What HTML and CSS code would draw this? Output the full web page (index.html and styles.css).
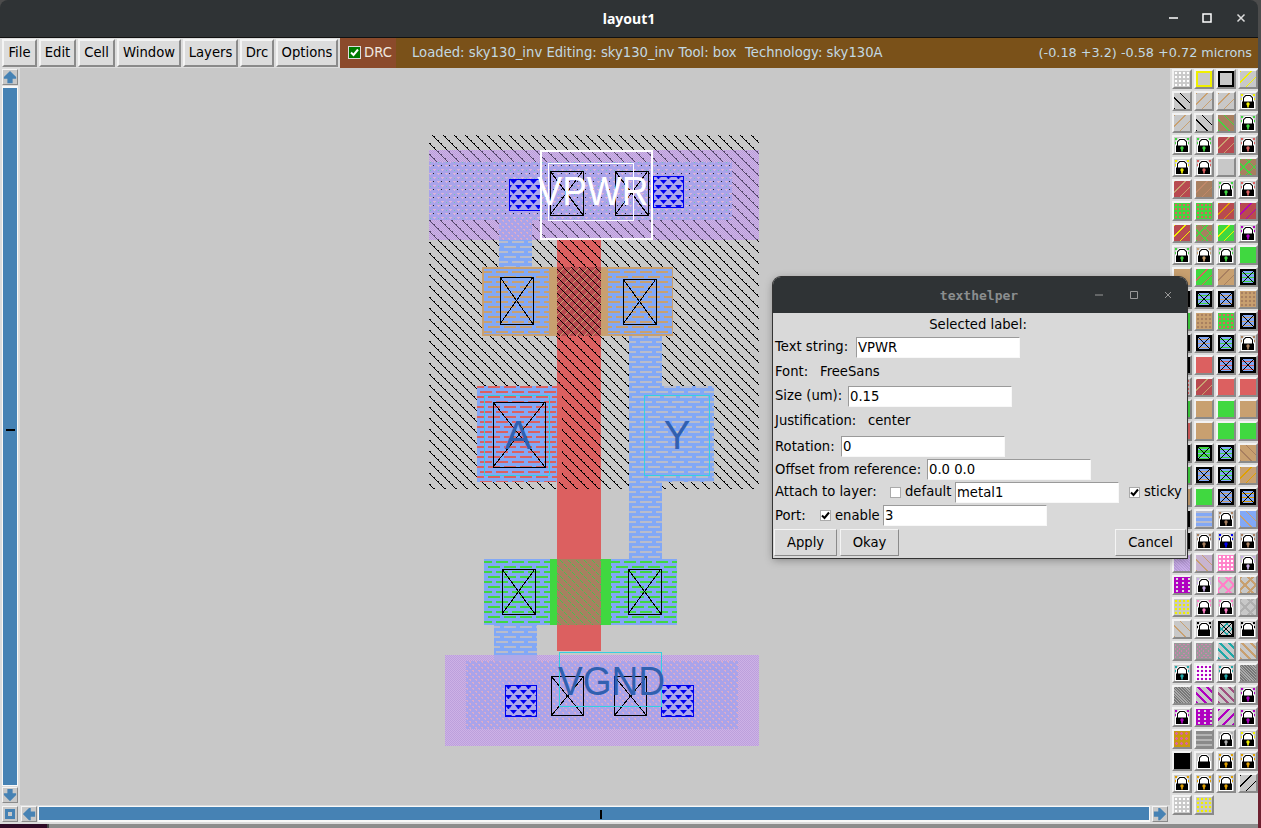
FILE: index.html
```html
<!DOCTYPE html>
<html lang="en">
<head>
<meta charset="utf-8">
<title>layout1</title>
<link rel="stylesheet" href="styles.css">
</head>
<body>
<svg class="defs" width="0" height="0" aria-hidden="true">
  <defs>
    <symbol id="L" viewBox="0 0 16 16">
      <path fill="#fff" d="M1 16V8h1V4l3-3h6l3 3v4h1v8z"/>
      <path fill="#000" d="M2 15V8.500h12V15z"/>
      <path fill="#000" d="M3 9V4.500L5.500 2h5L13 4.500V9h-1V5l-2-2H6L4 5v4z"/>
      <circle cx="8" cy="11" r="1.700" fill="currentColor"/>
      <rect x="7.200" y="11" width="1.600" height="3.500" fill="currentColor"/>
    </symbol>
    <symbol id="X" viewBox="0 0 16 16">
      <path fill="none" stroke="#000" stroke-width="2" d="M1 1h14v14H1z"/>
      <path fill="none" stroke="#000" d="M1 1l14 14M15 1L1 15"/>
    </symbol>
    <symbol id="arrow" viewBox="0 0 16 16">
      <path fill="#4682b4" d="M8 1l7 7v2h-4v5H5v-5H1V8z"/>
    </symbol>
    <pattern id="hatch" width="11" height="11" patternUnits="userSpaceOnUse">
      <path fill="#000" d="M0 0h2v1H0zM1 1h1v1H1zM2 2h1v1H2zM3 3h1v1H3zM4 4h2v1H4zM5 5h1v1H5zM6 6h1v1H6zM7 7h1v1H7zM8 8h2v1H8zM9 9h1v1H9zM10 10h1v1h-1z"/>
    </pattern>
    <pattern id="hatchp" width="11" height="11" patternUnits="userSpaceOnUse">
      <path fill="#54466a" d="M0 0h2v1H0zM1 1h1v1H1zM2 2h1v1H2zM3 3h1v1H3zM4 4h2v1H4zM5 5h1v1H5zM6 6h1v1H6zM7 7h1v1H7zM8 8h2v1H8zM9 9h1v1H9zM10 10h1v1h-1z"/>
    </pattern>
    <pattern id="hatchg" width="8" height="8" patternUnits="userSpaceOnUse">
      <path fill="#48c050" d="M0 0h1v1H0zM1 1h1v1H1zM2 2h1v1H2zM4 4h1v1H4zM5 5h1v1H5zM6 6h1v1H6z"/>
    </pattern>
    <pattern id="hatchc" width="8" height="8" patternUnits="userSpaceOnUse">
      <rect width="8" height="8" fill="#b84a50"/>
      <path fill="#000" d="M0 0h1v1H0zM1 1h1v1H1zM2 2h1v1H2zM3 3h1v1H3zM4 4h1v1H4zM5 5h1v1H5zM6 6h1v1H6zM7 7h1v1H7z"/>
      <path fill="#c8a070" d="M7 0h1v1H7zM6 1h1v1H6zM5 2h1v1H5zM3 4h1v1H3zM2 5h1v1H2zM1 6h1v1H1zM0 7h1v1H0z"/>
    </pattern>
    <pattern id="check" width="2" height="2" patternUnits="userSpaceOnUse">
      <rect width="2" height="2" fill="#cdb2e6"/>
      <path fill="#bca0dc" d="M0 0h1v1H0zM1 1h1v1H1z"/>
    </pattern>
    <pattern id="dots" width="8" height="8" patternUnits="userSpaceOnUse">
      <rect width="8" height="8" fill="#a9a3ea"/>
      <path fill="#dcb4d8" d="M1 1h3v1H1zM2 2h1v1H2zM5 5h3v1H5zM6 6h1v1H6z"/>
      <path fill="#70c8b0" d="M6 2h1v1H6z"/>
      <path fill="#222" d="M1 5h1v1H1z"/>
    </pattern>
    <pattern id="dots2" width="6" height="6" patternUnits="userSpaceOnUse">
      <rect width="6" height="6" fill="#a9a3ea"/>
      <path fill="#dcacc8" d="M1 1h2v1H1zM2 2h1v1H2zM4 4h2v1H4zM5 5h1v1H5z"/>
    </pattern>
    <pattern id="via" width="10" height="10" patternUnits="userSpaceOnUse">
      <rect width="10" height="10" fill="#aaa6ec"/>
      <path fill="#0000f0" d="M0 0h7l-3.500 4zM5 5h5v2l-1 2h-1z"/>
      <path fill="#0000f0" d="M0 5h2L0 8z"/>
    </pattern>
    <pattern id="stb" width="16" height="10" patternUnits="userSpaceOnUse">
      <rect width="16" height="10" fill="#82a8f6"/>
      <path fill="#b9bccb" d="M0 1h12v2H0zM8 6h8v2H8zM0 6h4v2H0z"/>
    </pattern>
    <pattern id="stt" width="16" height="10" patternUnits="userSpaceOnUse">
      <rect width="16" height="10" fill="#82a8f6"/>
      <path fill="#c8a070" d="M0 1h12v2H0zM8 6h8v2H8zM0 6h4v2H0z"/>
    </pattern>
    <pattern id="stg" width="16" height="10" patternUnits="userSpaceOnUse">
      <rect width="16" height="10" fill="#82a8f6"/>
      <path fill="#40d840" d="M0 1h12v2H0zM8 6h8v2H8zM0 6h4v2H0z"/>
    </pattern>
    <pattern id="str" width="16" height="10" patternUnits="userSpaceOnUse">
      <rect width="16" height="10" fill="#82a8f6"/>
      <path fill="#dc6060" d="M0 1h12v2H0zM8 6h8v2H8zM0 6h4v2H0z"/>
    </pattern>
  </defs>
</svg>

<div class="window">
  <header class="titlebar">
    <span class="title">layout1</span>
    <svg class="ctl ctl-min" width="12" height="12" viewBox="0 0 12 12"><path stroke="#fff" stroke-width="1.500" d="M1 6h9"/></svg>
    <svg class="ctl ctl-max" width="12" height="12" viewBox="0 0 12 12"><path fill="none" stroke="#fff" stroke-width="1.500" d="M2 2h8v8H2z"/></svg>
    <svg class="ctl ctl-close" width="12" height="12" viewBox="0 0 12 12"><path stroke="#ddd" stroke-width="1.500" d="M2.500 2.500l7 7M9.500 2.500l-7 7"/></svg>
  </header>

  <nav class="toolbar">
    <button class="tb">File</button>
    <button class="tb">Edit</button>
    <button class="tb">Cell</button>
    <button class="tb">Window</button>
    <button class="tb">Layers</button>
    <button class="tb">Drc</button>
    <button class="tb">Options</button>
    <div class="drc"><span class="drc-box"><svg width="9" height="9" viewBox="0 0 9 9"><path fill="none" stroke="#fff" stroke-width="2" d="M1 4.500l2.500 2.500L8 1.500"/></svg></span>DRC</div>
    <div class="status"><span>Loaded: sky130_inv Editing: sky130_inv Tool: box&nbsp; Technology: sky130A</span><span class="coords">(-0.18 +3.2) -0.58 +0.72 microns</span></div>
  </nav>

  <main class="work">
    <div class="vscroll">
      <span class="sb"><svg class="ar"><use href="#arrow"/></svg></span>
      <span class="vbar"><i class="vtick"></i></span>
      <span class="sb"><svg class="ar rot180"><use href="#arrow"/></svg></span>
    </div>

    <div class="canvas">
      <svg class="layout" width="1150" height="737" viewBox="20 68 1150 737">
        <!-- n-well -->
        <rect x="429" y="135" width="330" height="354" fill="url(#hatch)"/>

        <!-- vertical local interconnect -->
        <rect x="499" y="212" width="33" height="56" fill="url(#stb)"/>
        <rect x="629" y="336" width="33" height="224" fill="url(#stb)"/>
        <rect x="494" y="625" width="43" height="34" fill="url(#stb)"/>

        <!-- poly -->
        <rect x="557" y="236" width="44" height="415" fill="#dc6060"/>
        <rect x="557" y="240" width="44" height="249" fill="url(#hatch)"/>

        <!-- pmos -->
        <rect x="482" y="267" width="191" height="69" fill="#c8a070"/>
        <rect x="484" y="269" width="65" height="65" fill="url(#stt)"/>
        <rect x="608" y="269" width="64" height="65" fill="url(#stt)"/>
        <rect x="557" y="267" width="44" height="69" fill="url(#hatchc)"/>
        <path class="con" d="M500 277h33v47h-33z"/>
        <path class="cross" d="M500 277l33 47M533 277l-33 47"/>
        <path class="con" d="M623 279h33v45h-33z"/>
        <path class="cross" d="M623 279l33 45M656 279l-33 45"/>

        <!-- input A -->
        <rect x="477" y="386" width="85" height="96" fill="url(#str)"/>
        <rect x="557" y="386" width="5" height="96" fill="#dc6060"/>
        <rect x="484.500" y="395.500" width="65" height="80" class="lab"/>
        <path class="con" d="M493 402h52v65h-52z"/>
        <path class="cross" d="M493 402l52 65M545 402l-52 65"/>
        <text class="pin" x="518" y="449">A</text>

        <!-- output Y -->
        <rect x="629" y="386" width="85" height="96" fill="url(#stb)"/>
        <rect x="644.500" y="395.500" width="65" height="80" class="lab"/>
        <text class="pin" x="677" y="449">Y</text>

        <!-- nmos -->
        <rect x="484" y="559" width="193" height="66" fill="#40d840"/>
        <rect x="484" y="559" width="66" height="66" fill="url(#stg)"/>
        <rect x="611" y="559" width="66" height="66" fill="url(#stg)"/>
        <rect x="557" y="559" width="44" height="66" fill="#a88060"/>
        <rect x="557" y="559" width="44" height="66" fill="url(#hatchg)"/>
        <path class="con" d="M502 569h33v45h-33z"/>
        <path class="cross" d="M502 569l33 45M535 569l-33 45"/>
        <path class="con" d="M628 569h33v45h-33z"/>
        <path class="cross" d="M628 569l33 45M661 569l-33 45"/>

        <!-- VPWR rail -->
        <rect x="429" y="150" width="330" height="90" fill="url(#check)"/>
        <rect x="429" y="150" width="330" height="90" fill="url(#hatchp)"/>
        <rect x="429" y="162" width="303" height="58" fill="url(#dots)"/>
        <rect x="499" y="220" width="33" height="20" fill="url(#dots2)"/>
        <rect x="509" y="179" width="31" height="31" fill="url(#via)" stroke="#0000f0"/>
        <rect x="653.500" y="176.500" width="30" height="31" fill="url(#via)" stroke="#0000f0"/>
        <path class="con" d="M550 171h33v44h-33z"/>
        <path class="cross" d="M550 171l33 44M583 171l-33 44"/>
        <path class="con" d="M615 171h33v44h-33z"/>
        <path class="cross" d="M615 171l33 44M648 171l-33 44"/>
        <rect x="548.500" y="163.500" width="85" height="57" fill="none" stroke="#fff"/>
        <rect x="541" y="151" width="111" height="88" fill="none" stroke="#fff" stroke-width="2"/>
        <text class="big white" x="593" y="205" textLength="111" lengthAdjust="spacingAndGlyphs">VPWR</text>

        <!-- VGND rail -->
        <rect x="445" y="655" width="314" height="91" fill="url(#check)"/>
        <rect x="466" y="661" width="272" height="68" fill="url(#dots2)"/>
        <rect x="494" y="655" width="43" height="6" fill="#b0a8e8"/>
        <rect x="505.500" y="685.500" width="31" height="31" fill="url(#via)" stroke="#0000f0"/>
        <rect x="661.500" y="685.500" width="32" height="31" fill="url(#via)" stroke="#0000f0"/>
        <path class="con" d="M551 676h32v39h-32z"/>
        <path class="cross" d="M551.500 676.500l32 39M583.500 676.500l-32 39"/>
        <path class="con" d="M614 676h32v39h-32z"/>
        <path class="cross" d="M614.500 676.500l32 39M646.500 676.500l-32 39"/>
        <rect x="559.500" y="652.500" width="102" height="54" class="lab"/>
        <text class="big blue" x="611.500" y="695" textLength="107" lengthAdjust="spacingAndGlyphs">VGND</text>
      </svg>
    </div>

    <aside class="palette">
      <b class="k g hw"></b><b class="k o hy"></b><b class="k o hk"></b><b class="k f hy"></b>
      <b class="k s hk"></b><b class="k f ht"></b><b class="k f ht"></b><b class="k d hy"><svg><use href="#L"/></svg></b>
      <b class="k f ht"></b><b class="k s hk"></b><b class="k s bn hl"></b><b class="k d hl"><svg><use href="#L"/></svg></b>
      <b class="k d hl"><svg><use href="#L"/></svg></b><b class="k d hl"><svg><use href="#L"/></svg></b><b class="k f rd ht"></b><b class="k d hr"><svg><use href="#L"/></svg></b>
      <b class="k d hy"><svg><use href="#L"/></svg></b><b class="k d hr"><svg><use href="#L"/></svg></b><b class="k"></b><b class="k z bn hl"></b>
      <b class="k f rd ht"></b><b class="k f bn hb2"></b><b class="k d hl"><svg><use href="#L"/></svg></b><b class="k d hr"><svg><use href="#L"/></svg></b>
      <b class="k g bg hr"></b><b class="k g bg hr"></b><b class="k f rd ho"></b><b class="k f rd hm"></b>
      <b class="k f rd hy"></b><b class="k z bn hl"></b><b class="k f bg hy"></b><b class="k d hm"><svg><use href="#L"/></svg></b>
      <b class="k d hl"><svg><use href="#L"/></svg></b><b class="k d ht"><svg><use href="#L"/></svg></b><b class="k d hl"><svg><use href="#L"/></svg></b><b class="k bg"></b>
      <b class="k bt"></b><b class="k f bg hr"></b><b class="k f bt hb"></b><b class="k c hl"><svg><use href="#X"/></svg></b>
      <b class="k c ht"><svg><use href="#X"/></svg></b><b class="k c hl"><svg><use href="#X"/></svg></b><b class="k c ht"><svg><use href="#X"/></svg></b><b class="k g bt hn"></b>
      <b class="k bg"></b><b class="k g bt hb"></b><b class="k g bg hr"></b><b class="k c ht"><svg><use href="#X"/></svg></b>
      <b class="k c hb"><svg><use href="#X"/></svg></b><b class="k c ht"><svg><use href="#X"/></svg></b><b class="k c hl"><svg><use href="#X"/></svg></b><b class="k d hb"><svg><use href="#L"/></svg></b>
      <b class="k c hl"><svg><use href="#X"/></svg></b><b class="k br"></b><b class="k c hr"><svg><use href="#X"/></svg></b><b class="k c hr"><svg><use href="#X"/></svg></b>
      <b class="k g hr"></b><b class="k f rd ht"></b><b class="k br"></b><b class="k br"></b>
      <b class="k bg"></b><b class="k bt"></b><b class="k bg"></b><b class="k bt"></b>
      <b class="k br"></b><b class="k bt"></b><b class="k bg"></b><b class="k bg"></b>
      <b class="k c hb"><svg><use href="#X"/></svg></b><b class="k c2 hl"><svg><use href="#X"/></svg></b><b class="k c hl"><svg><use href="#X"/></svg></b><b class="k s bt hb"></b>
      <b class="k bg"></b><b class="k c ht"><svg><use href="#X"/></svg></b><b class="k c hl"><svg><use href="#X"/></svg></b><b class="k f bt ho"></b>
      <b class="k bt"></b><b class="k bg"></b><b class="k c ht"><svg><use href="#X"/></svg></b><b class="k c ho"><svg><use href="#X"/></svg></b>
      <b class="k c hk"><svg><use href="#X"/></svg></b><b class="k w hs"></b><b class="k d hb"><svg><use href="#L"/></svg></b><b class="k s w2 ht"></b>
      <b class="k c hb"><svg><use href="#X"/></svg></b><b class="k d hb"><svg><use href="#L"/></svg></b><b class="k d hu"><svg><use href="#L"/></svg></b><b class="k d hb"><svg><use href="#L"/></svg></b>
      <b class="k e"></b><b class="k s e2 ht"></b><b class="k g bp hw"></b><b class="k d hv"><svg><use href="#L"/></svg></b>
      <b class="k m"></b><b class="k d hv"><svg><use href="#L"/></svg></b><b class="k z2 hp"></b><b class="k z2 hq"></b>
      <b class="k g hy"></b><b class="k d hp"><svg><use href="#L"/></svg></b><b class="k d hp"><svg><use href="#L"/></svg></b><b class="k z2 ha"></b>
      <b class="k s ht"></b><b class="k d hk"><svg><use href="#L"/></svg></b><b class="k z hi"><svg><use href="#X"/></svg></b><b class="k d hk"><svg><use href="#L"/></svg></b>
      <b class="k e3"></b><b class="k s e3 hk"></b><b class="k f3 hi"></b><b class="k f3 hi2"></b>
      <b class="k d hi"><svg><use href="#L"/></svg></b><b class="k g wh hm"></b><b class="k d hi"><svg><use href="#L"/></svg></b><b class="k e4"></b>
      <b class="k s e4 hk"></b><b class="k f3 hm"></b><b class="k f3 hm2"></b><b class="k d hm"><svg><use href="#L"/></svg></b>
      <b class="k d hm"><svg><use href="#L"/></svg></b><b class="k m"></b><b class="k f2 hm"></b><b class="k d hm"><svg><use href="#L"/></svg></b>
      <b class="k au"></b><b class="k w3"></b><b class="k d ha"><svg><use href="#L"/></svg></b><b class="k d hy"><svg><use href="#L"/></svg></b>
      <b class="k bk"></b><b class="k hk"><svg><use href="#L"/></svg></b><b class="k d ho"><svg><use href="#L"/></svg></b><b class="k d ho"><svg><use href="#L"/></svg></b>
      <b class="k d ho"><svg><use href="#L"/></svg></b><b class="k d ho"><svg><use href="#L"/></svg></b><b class="k d ho"><svg><use href="#L"/></svg></b><b class="k f hk"></b>
      <b class="k g hw"></b><b class="k g hy"></b>
    </aside>

    <div class="hscroll">
      <span class="sb corner"><i></i></span>
      <span class="sb"><svg class="ar rot270"><use href="#arrow"/></svg></span>
      <span class="hbar"><i class="htick"></i></span>
      <span class="sb"><svg class="ar rot90"><use href="#arrow"/></svg></span>
    </div>
  </main>

  <section class="dialog">
    <header class="dlg-title">
      <span>texthelper</span>
      <svg class="dctl dctl-min" width="10" height="10" viewBox="0 0 10 10"><path stroke="#999" d="M1 5h8"/></svg>
      <svg class="dctl dctl-max" width="10" height="10" viewBox="0 0 10 10"><path fill="none" stroke="#999" d="M1.500 1.500h7v7h-7z"/></svg>
      <svg class="dctl dctl-close" width="10" height="10" viewBox="0 0 10 10"><path stroke="#999" d="M2 2l6 6M8 2L2 8"/></svg>
    </header>
    <div class="dlg-body">
      <div class="row r-head">Selected label:</div>
      <div class="row r-text"><label class="l-text">Text string:</label><input class="in" value="VPWR"></div>
      <div class="row r-font"><label class="l-font">Font:</label><span>FreeSans</span></div>
      <div class="row r-size"><label class="l-size">Size (um):</label><input class="in" value="0.15"></div>
      <div class="row r-just"><label class="l-just">Justification:</label><span>center</span></div>
      <div class="row r-rot"><label class="l-rot">Rotation:</label><input class="in" value="0"></div>
      <div class="row r-off"><label class="l-off">Offset from reference:</label><input class="in" value="0.0 0.0"></div>
      <div class="row r-att">
        <label class="l-att">Attach to layer:</label><i class="cb"></i><span class="l-def">default</span><input class="in" value="metal1">
        <i class="cb on stk"><svg width="9" height="9" viewBox="0 0 9 9"><path fill="none" stroke="#000" stroke-width="2" d="M1 4.500l2.500 2.500L8 1.500"/></svg></i><span>sticky</span>
      </div>
      <div class="row r-port">
        <label class="l-port">Port:</label><i class="cb on"><svg width="9" height="9" viewBox="0 0 9 9"><path fill="none" stroke="#000" stroke-width="2" d="M1 4.500l2.500 2.500L8 1.500"/></svg></i><span class="l-en">enable</span><input class="in" value="3">
      </div>
      <div class="row r-btn">
        <button class="db b-apply">Apply</button>
        <button class="db b-okay">Okay</button>
        <button class="db b-cancel">Cancel</button>
      </div>
    </div>
  </section>
  <div class="foot"><i></i></div>
</div>
</body>
</html>
```

FILE: styles.css
```css
* { box-sizing: border-box; }
html, body { margin: 0; height: 100%; }
body {
  width: 1261px;
  height: 828px;
  overflow: hidden;
  background: linear-gradient(#4c4c4c 0 310px, #6e2030 310px);
  font-family: "DejaVu Sans", sans-serif;
  font-size: 13.2px;
  color: #000;
}
.defs { position: absolute; }

.window {
  position: relative;
  width: 1258px;
  height: 828px;
  display: flex;
  flex-direction: column;
}

.titlebar {
  flex: 0 0 38px;
  position: relative;
  display: flex;
  align-items: center;
  justify-content: center;
  background: #2f3335;
  border-bottom: 1px solid #111;
  border-radius: 8px 8px 0 0;
  padding-bottom: 1px;
}
.title { color: #fff; font: 700 14px "Noto Sans", sans-serif; }
.ctl { position: absolute; top: 12px; }
.ctl-min { left: 1168px; }
.ctl-max { left: 1201px; }
.ctl-close { left: 1235px; }

.toolbar {
  flex: 0 0 30px;
  display: grid;
  grid-template-columns: 35px 37px 37px 64px 55px 34px 62px 56px 1fr;
  column-gap: 2px;
  padding: 1px 0 1px 2px;
  background: #dcdcdc;
}
.tb {
  font: inherit;
  padding: 0 0 2px;
  background: #dcdcdc;
  border: 2px solid;
  border-color: #f4f4f4 #8a8a8a #8a8a8a #f4f4f4;
}
.drc {
  display: flex;
  align-items: center;
  gap: 4px;
  padding: 0 0 2px 9px;
  margin-top: -1px;
  margin-bottom: -1px;
  background: #8b4a2b;
  color: #f0e8e0;
}
.drc-box {
  width: 11px;
  height: 11px;
  background: #007a00;
  outline: 1px solid #ddd;
  display: flex;
  align-items: center;
  justify-content: center;
}
.status {
  margin: -1px 0 -1px -2px;
  display: flex;
  justify-content: space-between;
  align-items: center;
  padding: 0 6px 2px 16px;
  background: #7a5119;
  color: #c3d9e2;
  white-space: pre;
}
.coords { font-size: 12.8px; }

.work {
  flex: 1;
  display: grid;
  grid-template-columns: 20px 1fr 88px;
  grid-template-rows: 737px 19px;
  background: #dcdcdc;
}
.vscroll {
  display: flex;
  flex-direction: column;
  padding: 1px 2px 2px;
  gap: 1px;
}
.sb {
  flex: 0 0 16px;
  width: 16px;
  height: 16px;
  display: block;
  background: #c8c8c8;
  border: 1px solid;
  border-color: #f4f4f4 #8a8a8a #8a8a8a #f4f4f4;
}
.ar { display: block; width: 14px; height: 14px; }
.rot90 { transform: rotate(90deg); }
.rot180 { transform: rotate(180deg); }
.rot270 { transform: rotate(270deg); }
.vbar {
  flex: 1;
  position: relative;
  background: #4682b4;
  border: 1px solid #f8f8f8;
  border-top-width: 2px;
}
.vtick { position: absolute; left: 3px; top: 341px; width: 9px; height: 2px; background: #000; }
.canvas { background: #c8c8c8; overflow: hidden; }
.layout { display: block; shape-rendering: crispEdges; }
.con { fill: none; stroke: #000; stroke-width: 1; transform: translate(.5px, .5px); }
.cross { fill: none; stroke: #000; stroke-width: 1; }
.lab { fill: none; stroke: #35d0e0; stroke-width: 1; }
.big, .pin { font-family: "Liberation Sans", sans-serif; text-anchor: middle; shape-rendering: auto; }
.big { font-size: 41px; }
.pin { font-size: 40px; fill: #3060b0; }
.white { fill: #fff; }
.blue { fill: #3060b0; }

.palette {
  grid-row: 1 / span 2;
  grid-column: 3;
  display: grid;
  grid-template-columns: repeat(4, 20px);
  grid-auto-rows: 20px;
  gap: 2px;
  padding: 1px 0 0 2px;
  align-content: start;
  --h: #000;
}
.k {
  display: block;
  width: 20px;
  height: 20px;
  background-color: #c8c8c8;
  border: 2px solid;
  border-color: #f2f2f2 #8a8a8a #8a8a8a #f2f2f2;
  overflow: hidden;
}
.k svg { display: block; width: 16px; height: 16px; color: var(--h); }

/* hatch colours */
.hy { --h: #f0f000; } .hk { --h: #000; } .ht { --h: #c8a070; } .hl { --h: #40d840; }
.hr { --h: #dc6060; } .hb { --h: #a88060; } .hb2 { --h: #c08868; } .ho { --h: #e0a000; } .hm { --h: #b000c0; }
.hw { --h: #fff; }    .hn { --h: #a88060; } .hs { --h: #b9bccb; } .hu { --h: #0000f0; }
.hv { --h: #c9aee8; } .hp { --h: #ff80c8; } .hq { --h: #c8a070; } .ha { --h: #b0b0b0; }
.hi { --h: #20a8a8; } .hi2 { --h: #c8a070; } .hm2 { --h: #a05080; }

/* solid fills */
.bg { background-color: #40d840; } .bt { background-color: #c8a070; } .br { background-color: #dc6060; }
.rd { background-color: #b84a50; } .wh { background-color: #fff; }
.bn { background-color: #a88060; } .bp { background-color: #ff80c8; } .bk { background-color: #000; }

/* pattern shapes */
.f { background-image: repeating-linear-gradient(135deg, var(--h) 0 1px, transparent 1px 7.500px); }
.s { background-image: repeating-linear-gradient(45deg, var(--h) 0 1.200px, transparent 1.200px 7.500px); }
.z {
  background-image:
    repeating-linear-gradient(45deg, var(--h) 0 1px, transparent 1px 7.500px),
    repeating-linear-gradient(135deg, var(--h) 0 1px, transparent 1px 7.500px);
}
.z2 {
  background-image:
    repeating-linear-gradient(45deg, var(--h) 0 2px, transparent 2px 8px),
    repeating-linear-gradient(135deg, var(--h) 0 2px, transparent 2px 8px);
}
.g { background-image: radial-gradient(circle, var(--h) 1.300px, transparent 1.600px); background-size: 4px 4px; }
.d { background-image: radial-gradient(circle, var(--h) 0.900px, transparent 1.100px); background-size: 4px 4px; }
.o { box-shadow: inset 0 0 0 2px var(--h); }
.c {
  background-color: #82a8f6;
  background-image: repeating-linear-gradient(180deg, var(--h) 0 1.500px, transparent 1.500px 4px);
}
.c2 { background-color: #40d840; background-image: repeating-linear-gradient(180deg, #82a8f6 0 1.500px, transparent 1.500px 4px); }
.w { background-color: #82a8f6; background-image: repeating-linear-gradient(180deg, var(--h) 0 1.500px, transparent 1.500px 5px); }
.w2 { background-color: #82a8f6; }
.w3 { background-image: repeating-linear-gradient(180deg, #8a8a8a 0 3px, #b4b4b4 3px 5px); }
.e { background-color: #c9aee8; background-image: repeating-linear-gradient(45deg, #b89cd8 0 1px, transparent 1px 2px); }
.e2 { background-color: #c8b4d0; }
.e3 { background-color: #d080b0; background-image: repeating-linear-gradient(45deg, #999 0 1.500px, transparent 1.500px 3px), repeating-linear-gradient(135deg, #999 0 1.500px, transparent 1.500px 3px); }
.e4 { background-color: #aaa; background-image: repeating-linear-gradient(45deg, #777 0 1px, transparent 1px 2px); }
.m { background-color: #b000c0; background-image: radial-gradient(circle, #ddd 1px, transparent 1.600px); background-size: 6px 4px; }
.f2 { background-image: repeating-linear-gradient(135deg, var(--h) 0 2px, transparent 2px 7px); }
.f3 { background-image: repeating-linear-gradient(45deg, var(--h) 0 2px, transparent 2px 6px); }
.au { background-color: #c89a10; background-image: radial-gradient(circle, #e060a0 1.200px, transparent 1.500px); background-size: 5px 5px; }

.hscroll {
  grid-column: 1 / span 2;
  display: flex;
  gap: 3px;
  padding: 1px 2px 2px;
}
.hbar {
  flex: 1;
  position: relative;
  margin-left: -2px;
  margin-right: -1px;
  background: #4682b4;
  border: 2px solid #f8f8f8;
  border-width: 1px 1px 2px 1px;
}
.htick { position: absolute; left: 561px; top: 3px; width: 2px; height: 9px; background: #000; }
.corner { display: flex; align-items: center; justify-content: center; }
.corner i { display: block; width: 10px; height: 10px; border: 3px solid #4682b4; background: #c8c8c8; }

.foot { flex: 1; background: #8c8c8c; }
.foot i { display: block; width: 49px; height: 100%; background: #2e0a26; border-right: 2px solid #444; }

.dialog {
  position: absolute;
  left: 773px;
  top: 277px;
  width: 414px;
  height: 281px;
  border-radius: 8px 8px 0 0;
  background: #d9d9d9;
  box-shadow: 0 0 0 1px #333, 0 2px 8px rgba(0,0,0,.35);
  overflow: hidden;
}
.dlg-title {
  height: 36px;
  position: relative;
  background: #2f3335;
  color: #8b8e8f;
  display: flex;
  align-items: center;
  justify-content: center;
  font: 700 13px "DejaVu Sans Mono", monospace;
  padding-right: 2px;
}
.dctl { position: absolute; top: 13px; }
.dctl-min { left: 321px; }
.dctl-max { left: 356px; }
.dctl-close { left: 390px; }
.dlg-body { display: flex; flex-direction: column; padding: 0 2px; font-size: 13.2px; }
.row { display: flex; align-items: center; white-space: pre; }
.r-text > label, .r-size > label, .r-just > *, .r-att > label, .r-att > span { margin-bottom: 2px; }
.r-off > label, .r-port > label, .r-port > span { margin-bottom: 1px; }
.r-head { height: 23px; justify-content: center; padding-right: 4px; padding-bottom: 1px; }
.r-text { height: 22px; }
.r-font { height: 26px; }
.r-size { height: 25px; }
.r-just { height: 25px; }
.r-rot { height: 24px; }
.r-off, .r-att, .r-port { height: 23px; }
.r-btn { height: 27px; margin-top: 2px; align-items: stretch; margin-left: -1px; margin-right: -1px; gap: 3px; }
.in {
  width: 164px;
  height: 21px;
  padding: 0 1px;
  border: 1px solid #c8c8c8;
  border-color: #9a9a9a #f8f8f8 #f8f8f8 #9a9a9a;
  background: #fff;
  font: inherit;
  color: #000;
  outline: 0;
}
.l-text { width: 81px; }
.l-font { width: 45px; }
.l-size { width: 73px; }
.l-just { width: 93px; }
.l-rot { width: 66px; }
.l-off { width: 152px; }
.l-att { width: 115px; }
.l-def { width: 50px; margin-left: 4px; }
.l-port { width: 45px; }
.l-en { width: 48px; margin-left: 4px; }
.cb {
  flex: 0 0 11px;
  height: 11px;
  background: #fff;
  border: 1px solid #aaa;
  display: flex;
  align-items: center;
  justify-content: center;
}
.stk { margin-left: 10px; margin-right: 4px; }
.db {
  font: inherit;
  padding: 0 0 1px;
  background: #d9d9d9;
  border: 1px solid;
  border-color: #f4f4f4 #8a8a8a #8a8a8a #f4f4f4;
}
.b-apply { width: 63px; }
.b-okay { width: 59px; }
.b-cancel { width: 71px; margin-left: auto; }
```
